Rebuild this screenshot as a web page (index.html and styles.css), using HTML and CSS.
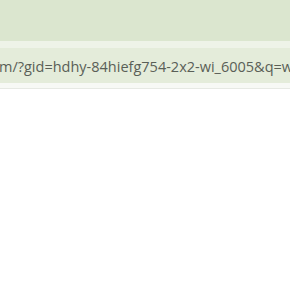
FILE: index.html
```html
<!DOCTYPE html>
<html>
<head>
<meta charset="utf-8">
<link rel="stylesheet" href="styles.css">
</head>
<body>
<div class="toolbar"></div>
<div class="strip"></div>
<div class="urlbar"><span class="url">m/?gid=hdhy-84hiefg754-2x2-wi_6005&amp;q=w</span></div>
<div class="gap"></div>
<div class="page"></div>
</body>
</html>
```
FILE: styles.css
```css
html, body {
  margin: 0;
  padding: 0;
  width: 290px;
  height: 290px;
  overflow: hidden;
  background: #ffffff;
}
.toolbar {
  height: 41px;
  background: #dbe6cf;
}
.strip {
  height: 7px;
  background: #eef3e8;
}
.urlbar {
  height: 35px;
  background: #e4ecda;
  display: flex;
  align-items: center;
  white-space: nowrap;
  overflow: hidden;
}
.url {
  font-family: "Open Sans", "DejaVu Sans", sans-serif;
  font-size: 14.5px;
  color: #5a5f57;
  margin-left: -1px;
  padding-top: 1px;
}
.gap {
  height: 5px;
  background: #f7f9f5;
  border-bottom: 1px solid #e6e9e3;
}
.page {
  background: #ffffff;
}
```
